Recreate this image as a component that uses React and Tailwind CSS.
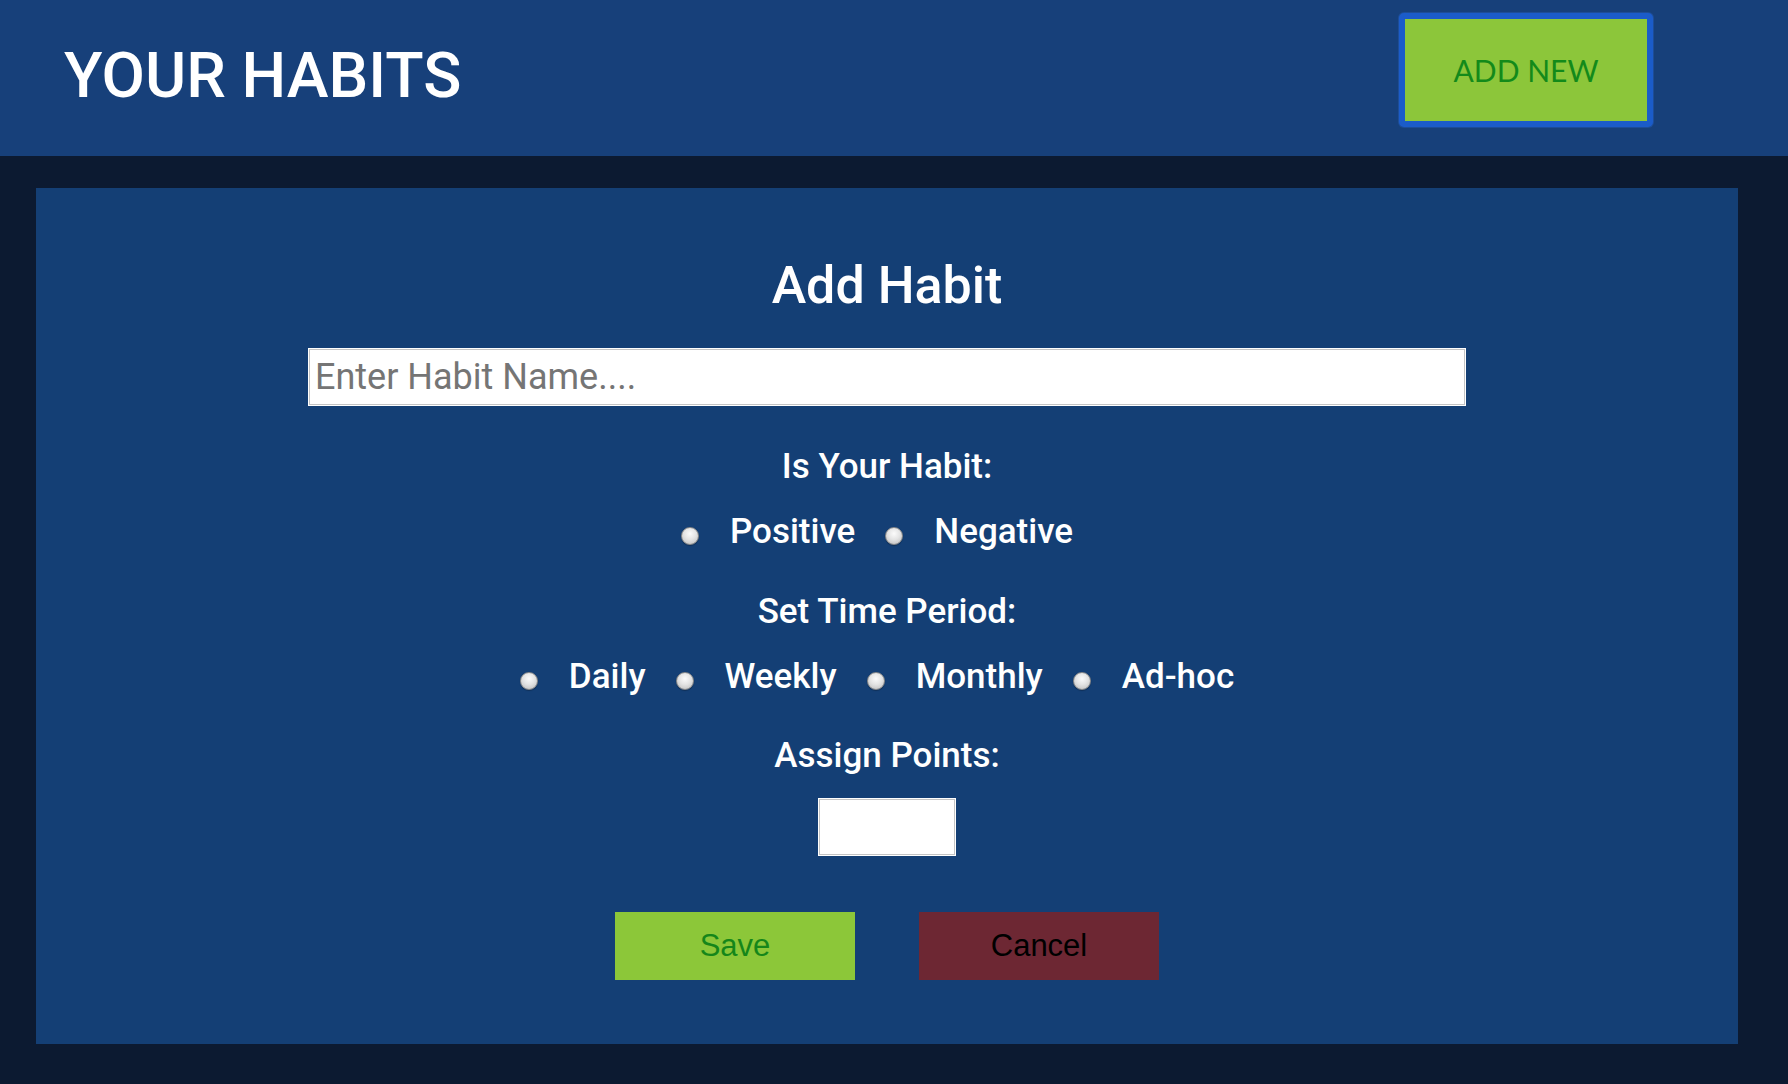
import React from "react";

function Radio() {
  return (
    <span className="mt-[8px] inline-block h-[18px] w-[18px] shrink-0 rounded-full border border-[#8a8a8a] bg-[radial-gradient(circle_at_50%_35%,#fbfbfb_0%,#e4e4e4_45%,#bababa_100%)] shadow-[0_1px_1px_rgba(0,0,0,0.25)]" />
  );
}

function RadioRow({ items }) {
  return (
    <div className="flex h-[40px] items-center justify-center pr-[20px]">
      {items.map((label, i) => (
        <div key={label} className={"flex items-center " + (i > 0 ? "ml-[30px]" : "")}>
          <Radio />
          <span className="ml-[31px] text-[35px] font-medium leading-[40px] text-white">{label}</span>
        </div>
      ))}
    </div>
  );
}

export default function App() {
  return (
    <div className="min-h-screen bg-[#0c1a31] font-['Roboto',sans-serif]">
      <header className="flex h-[156px] items-start justify-between bg-[#17407a] pl-[64px] pr-[135px]">
        <h1 className="pt-[44px] text-[63px] font-medium leading-[63px] text-white">YOUR HABITS</h1>
        <button className="mt-[13px] flex h-[114px] w-[254px] items-center justify-center rounded-[5px] border-[6px] border-[#1b5cc9] bg-[#8cc63a] shadow-[0_0_0_1px_#1d4d97] font-['Lato',sans-serif] text-[30px] leading-none text-[#138a1a]">
          ADD NEW
        </button>
      </header>

      <div className="ml-[36px] mr-[50px] mt-[32px] flex flex-col items-center bg-[#143f75] pb-[64px] pt-[68px]">
        <h2 className="text-[52px] font-medium leading-[60px] text-white">Add Habit</h2>
        <input
          type="text"
          placeholder="Enter Habit Name...."
          className="mt-[32px] h-[58px] w-[1158px] border border-white bg-white pl-[6px] text-[36px] text-[#333] shadow-[inset_0_0_0_1px_#c4c4c4] outline-none placeholder:text-[#757575]"
        />
        <div className="mt-[41px] text-[35px] font-medium leading-[40px] text-white">Is Your Habit:</div>
        <div className="mt-[25px]">
          <RadioRow items={["Positive", "Negative"]} />
        </div>
        <div className="mt-[40px] text-[35px] font-medium leading-[40px] text-white">Set Time Period:</div>
        <div className="mt-[25px]">
          <RadioRow items={["Daily", "Weekly", "Monthly", "Ad-hoc"]} />
        </div>
        <div className="mt-[39px] text-[35px] font-medium leading-[40px] text-white">Assign Points:</div>
        <input
          type="text"
          className="mt-[22px] h-[58px] w-[138px] border border-white bg-white text-[30px] shadow-[inset_0_0_0_1px_#c4c4c4] outline-none"
        />
        <div className="mt-[56px] flex gap-[64px] font-['Liberation_Sans',Arial,sans-serif] text-[31px]">
          <button className="flex h-[68px] w-[240px] items-center justify-center bg-[#8cc739] text-[#15861a]">Save</button>
          <button className="flex h-[68px] w-[240px] items-center justify-center bg-[#6d2733] text-black">Cancel</button>
        </div>
      </div>
    </div>
  );
}
